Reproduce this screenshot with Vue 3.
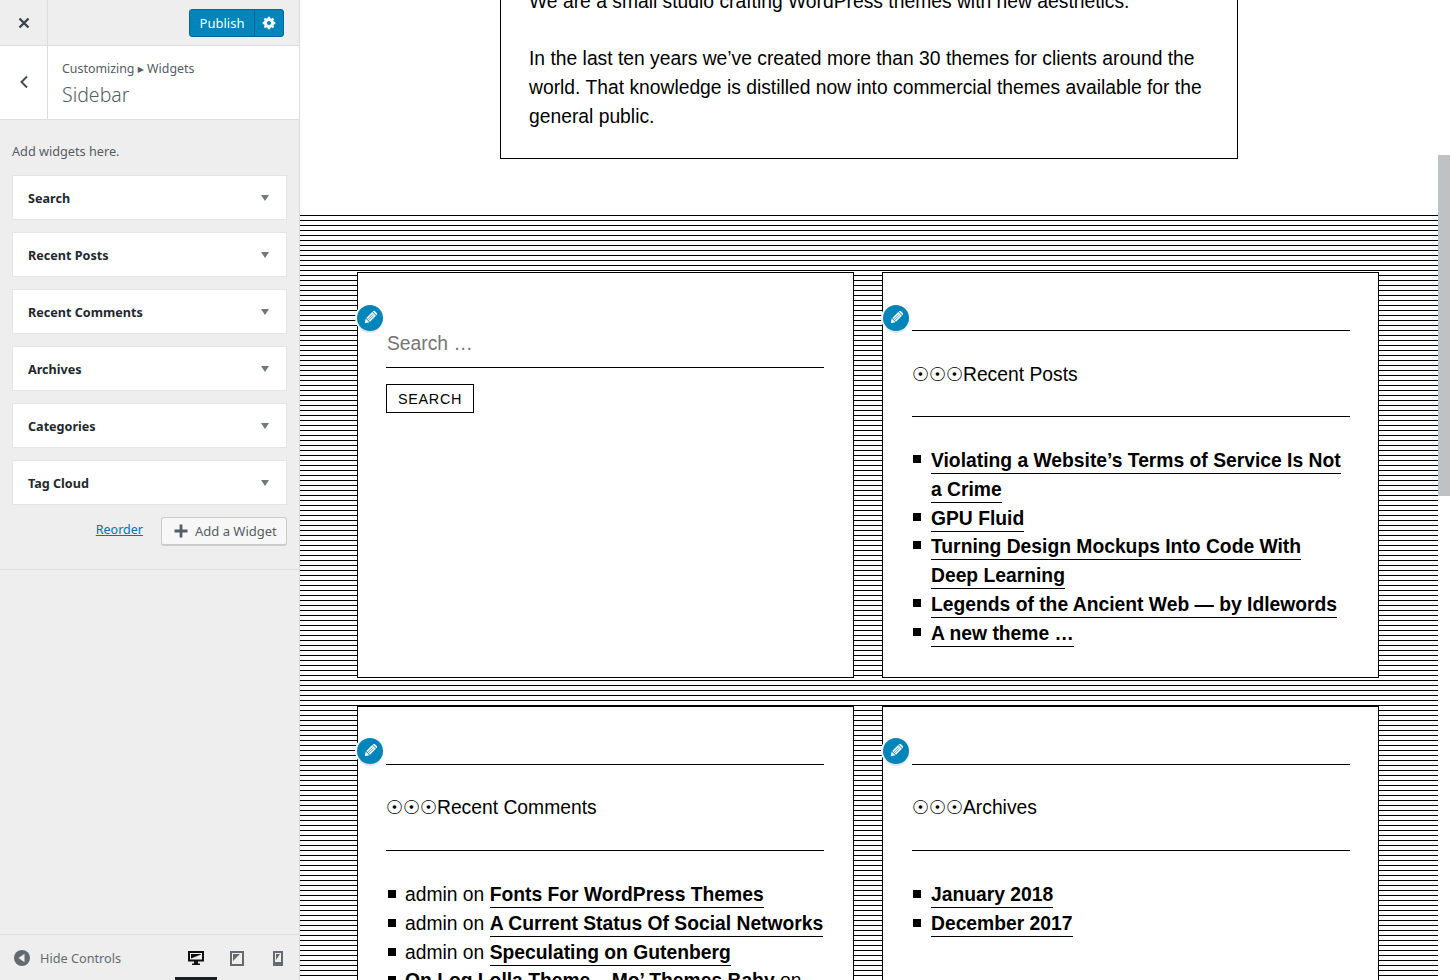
<script setup>
const widgets = ['Search', 'Recent Posts', 'Recent Comments', 'Archives', 'Categories', 'Tag Cloud']
const posts = [
  'Violating a Website’s Terms of Service Is Not a Crime',
  'GPU Fluid',
  'Turning Design Mockups Into Code With Deep Learning',
  'Legends of the Ancient Web — by Idlewords',
  'A new theme …'
]
const comments = [
  { a: 'admin on ', t: 'Fonts For WordPress Themes' },
  { a: 'admin on ', t: 'A Current Status Of Social Networks' },
  { a: 'admin on ', t: 'Speculating on Gutenberg' },
  { a: '', t: 'On Log Lolla Theme – Mo’ Themes Baby', b: ' on' }
]
const archives = ['January 2018', 'December 2017']
</script>

<template>
  <div class="app">
    <aside class="side">
      <div class="top">
        <div class="close">
          <svg width="12" height="12" viewBox="0 0 12 12"><path d="M1.500 1.500l9 9M10.500 1.500l-9 9" stroke="#3c434a" stroke-width="2.400" fill="none"/></svg>
        </div>
        <div class="pub-wrap">
          <div class="pub">
            <span class="pub-text">Publish</span>
            <span class="pub-gear">
              <svg width="14" height="14" viewBox="0 0 20 20"><path fill="#fff" d="M18 11.500v-3l-2.300-.5a6 6 0 0 0-.6-1.400l1.300-2-2.100-2.100-2 1.300a6 6 0 0 0-1.400-.6L10.500 1h-3L7 3.200a6 6 0 0 0-1.400.6l-2-1.300L1.500 4.600l1.300 2a6 6 0 0 0-.6 1.400L0 8.500v3l2.200.5a6 6 0 0 0 .6 1.400l-1.300 2 2.100 2.100 2-1.300a6 6 0 0 0 1.400.6l.5 2.200h3l.5-2.200a6 6 0 0 0 1.400-.6l2 1.300 2.100-2.100-1.300-2a6 6 0 0 0 .6-1.400zM9 13a3 3 0 1 1 0-6 3 3 0 0 1 0 6z" transform="translate(1 0)"/></svg>
            </span>
          </div>
        </div>
      </div>
      <div class="head">
        <div class="back">
          <svg width="10" height="14" viewBox="0 0 10 14"><path d="M8 1.500L2.500 7 8 12.500" stroke="#444c55" stroke-width="2" fill="none"/></svg>
        </div>
        <div class="head-text">
          <div class="crumb">Customizing <span class="crumb-arrow">▶</span> Widgets</div>
          <div class="title">Sidebar</div>
        </div>
      </div>
      <div class="panel">
        <p class="hint">Add widgets here.</p>
        <div v-for="w in widgets" :key="w" class="widget">
          <span>{{ w }}</span>
          <i class="tri"></i>
        </div>
        <div class="actions">
          <a class="reorder">Reorder</a>
          <div class="add">
            <svg width="14" height="14" viewBox="0 0 14 14"><path d="M7 0.500v13M0.500 7h13" stroke="#555d66" stroke-width="2.800" fill="none"/></svg>
            <span>Add a Widget</span>
          </div>
        </div>
      </div>
      <div class="foot">
        <div class="hide">
          <svg width="16" height="16" viewBox="0 0 16 16"><circle cx="8" cy="8" r="8" fill="#656a70"/><path d="M10.500 3.700v8.600L4.500 8z" fill="#eee"/></svg>
          <span>Hide Controls</span>
        </div>
        <div class="devices">
          <div class="dev active">
            <svg width="16" height="16" viewBox="0 0 16 16"><path fill="#111" fill-rule="evenodd" d="M0 1h16v10.500H10V13.500h2V15H4v-1.500h2V11.500H0zM2 3v6.500h12V3z"/><path fill="#111" d="M3 4h10v0.500L3 8.500z"/></svg>
          </div>
          <div class="dev">
            <svg width="14" height="16" viewBox="0 0 14 16"><path fill="#656a70" fill-rule="evenodd" d="M0 1h14v15H0zM2 3v11h10V3z"/><path fill="#656a70" d="M3 4h7L3 11z"/></svg>
          </div>
          <div class="dev">
            <svg width="10" height="16" viewBox="0 0 10 16"><path fill="#656a70" fill-rule="evenodd" d="M0 1h10v15H0zM2 3v9h6V3z"/><path fill="#656a70" d="M3 4h4L3 10z"/></svg>
          </div>
        </div>
      </div>
    </aside>

    <main class="preview">
      <div class="intro-wrap">
        <div class="intro">
          <p>We are a small studio crafting WordPress themes with new aesthetics.</p>
          <p>In the last ten years we’ve created more than 30 themes for clients around the world. That knowledge is distilled now into commercial themes available for the general public.</p>
        </div>
      </div>
      <section class="stripes">
        <div class="card first">
          <span class="pen"><svg width="14" height="14" viewBox="0 0 16 16"><g transform="rotate(45 8 8)"><path fill="#fff" d="M5 -1.500h6v2H5zM5 1.500h6v9.500H5zM5 12h6l-3 4.500z"/><path stroke="#0085ba" stroke-width=".8" d="M7 3v8M9 3v8"/></g></svg></span>
          <div class="search-field">Search …</div>
          <div class="search-btn">SEARCH</div>
        </div>
        <div class="card first">
          <span class="pen"><svg width="14" height="14" viewBox="0 0 16 16"><g transform="rotate(45 8 8)"><path fill="#fff" d="M5 -1.500h6v2H5zM5 1.500h6v9.500H5zM5 12h6l-3 4.500z"/><path stroke="#0085ba" stroke-width=".8" d="M7 3v8M9 3v8"/></g></svg></span>
          <h2 class="wtitle"><span class="suns">☉☉☉</span>Recent Posts</h2>
          <ul class="list">
            <li v-for="p in posts" :key="p"><a>{{ p }}</a></li>
          </ul>
        </div>
        <div class="card second">
          <span class="pen"><svg width="14" height="14" viewBox="0 0 16 16"><g transform="rotate(45 8 8)"><path fill="#fff" d="M5 -1.500h6v2H5zM5 1.500h6v9.500H5zM5 12h6l-3 4.500z"/><path stroke="#0085ba" stroke-width=".8" d="M7 3v8M9 3v8"/></g></svg></span>
          <h2 class="wtitle"><span class="suns">☉☉☉</span>Recent Comments</h2>
          <ul class="list">
            <li v-for="c in comments" :key="c.t">{{ c.a }}<a>{{ c.t }}</a>{{ c.b }}</li>
          </ul>
        </div>
        <div class="card second">
          <span class="pen"><svg width="14" height="14" viewBox="0 0 16 16"><g transform="rotate(45 8 8)"><path fill="#fff" d="M5 -1.500h6v2H5zM5 1.500h6v9.500H5zM5 12h6l-3 4.500z"/><path stroke="#0085ba" stroke-width=".8" d="M7 3v8M9 3v8"/></g></svg></span>
          <h2 class="wtitle"><span class="suns">☉☉☉</span>Archives</h2>
          <ul class="list">
            <li v-for="a in archives" :key="a"><a>{{ a }}</a></li>
          </ul>
        </div>
      </section>
    </main>

    <div class="scroll"><div class="thumb"></div></div>
  </div>
</template>

<style>
html, body { margin: 0; overflow: hidden; background: #fff; }
</style>

<style scoped>
.app { width: 1450px; height: 980px; display: flex; overflow: hidden; background: #fff; }
.side { width: 300px; height: 980px; flex: none; background: #eee; border-right: 1px solid #ddd; display: flex; flex-direction: column; font-family: "Noto Sans", sans-serif; color: #555d66; box-sizing: border-box; }
.top { height: 46px; flex: none; display: flex; border-bottom: 1px solid #ddd; box-sizing: border-box; }
.close { width: 48px; border-right: 1px solid #ddd; box-sizing: border-box; display: flex; align-items: center; justify-content: center; }
.pub-wrap { flex: 1; display: flex; justify-content: flex-end; padding: 9px 15px 0 0; }
.pub { width: 95px; height: 28px; display: flex; background: #0085ba; border: 1px solid #006799; border-radius: 3px; box-sizing: border-box; color: #fff; font-size: 13px; }
.pub-text { width: 64px; text-align: center; line-height: 26px; }
.pub-gear { flex: 1; border-left: 1px solid #006799; display: flex; align-items: center; justify-content: center; }
.head { height: 73px; flex: none; display: flex; background: #fff; border-bottom: 1px solid #ddd; box-sizing: content-box; }
.back { width: 48px; border-right: 1px solid #ddd; display: flex; align-items: center; justify-content: center; padding-bottom: 1px; box-sizing: border-box; }
.head-text { padding: 14px 0 0 14px; }
.crumb { font-size: 12.400px; line-height: 18px; color: #555d66; white-space: nowrap; }
.crumb-arrow { font-size: 8px; position: relative; top: -1px; font-family: "DejaVu Sans", sans-serif; }
.title { font-size: 19.500px; line-height: 28px; margin-top: 1px; color: #555d66; font-weight: 300; }
.panel { padding: 0 12px; height: 449px; border-bottom: 1px solid #ddd; flex: none; }
.hint { margin: 0; padding-top: 22px; font-size: 12.700px; line-height: 18px; height: 33px; }
.widget { height: 45px; margin-bottom: 12px; background: #fff; border: 1px solid #e5e5e5; box-sizing: border-box; display: flex; align-items: center; justify-content: space-between; padding: 2px 17px 0 15px; font-size: 12.600px; font-weight: 700; color: #23282d; }
.tri { width: 0; height: 0; border-left: 4px solid transparent; border-right: 4px solid transparent; border-top: 6px solid #72777c; margin-top: -2px; }
.actions { display: flex; justify-content: flex-end; align-items: flex-start; gap: 18px; }
.reorder { font-size: 12.500px; color: #0073aa; text-decoration: underline; line-height: 18px; margin-top: 4px; }
.add { width: 126px; height: 29px; background: #f7f7f7; border: 1px solid #ccc; border-bottom-width: 2px; border-radius: 3px; box-sizing: border-box; display: flex; align-items: center; gap: 7px; padding-left: 12px; font-size: 13px; white-space: nowrap; }
.foot { margin-top: auto; height: 46px; border-top: 1px solid #ddd; box-sizing: border-box; display: flex; justify-content: space-between; padding-left: 14px; }
.hide { display: flex; align-items: center; gap: 10px; font-size: 12.700px; color: #656a70; }
.devices { display: flex; }
.dev { width: 41px; height: 45px; display: flex; align-items: center; justify-content: center; box-sizing: border-box; padding-right: 1px; }
.dev.active { width: 42px; border-bottom: 3px solid #191e23; padding: 3px 0 0; }
.preview { width: 1138px; height: 980px; flex: none; background: #fff; font-family: "Liberation Sans", sans-serif; color: #000; overflow: hidden; }
.intro-wrap { height: 215px; display: flex; justify-content: center; }
.intro { width: 738px; height: 189px; margin-top: -30px; border: 1px solid #000; box-sizing: border-box; padding: 16.600px 28px 0; font-size: 19.300px; line-height: 28.800px; }
.intro p { margin: 0 0 29px; }
.stripes { display: grid; grid-template-columns: 497px 497px; column-gap: 28px; row-gap: 28px; padding: 57px 0 0 57px; height: 765px; box-sizing: border-box; background: repeating-linear-gradient(to bottom, #000 0, #000 1px, #fff 1px, #fff 5px); }
.card { position: relative; height: 406px; background: #fff; border: 1px solid #000; box-sizing: border-box; padding: 57px 29px 0 28px; }
.card:nth-child(even) { padding: 57px 28px 0 29px; }
.pen { position: absolute; left: -1px; top: 31px; width: 26px; height: 26px; border-radius: 50%; background: #0085ba; box-shadow: 0 2px 1px rgba(46,68,83,.15), 0 0 0 2px #fff; display: flex; align-items: center; justify-content: center; z-index: 2; }
.card.first .pen { top: 32px; }
.card:nth-child(even) .pen { left: 0; }
.search-field { height: 37px; border-bottom: 1px solid #000; font-size: 19.300px; line-height: 28px; color: #757575; padding-left: 1px; }
.search-btn { margin-top: 16px; width: 88px; height: 29px; border: 1px solid #000; box-sizing: border-box; font-size: 14.400px; letter-spacing: .7px; text-align: center; line-height: 27px; padding-top: 1px; }
.wtitle { margin: 0; border-top: 1px solid #000; border-bottom: 1px solid #000; height: 87px; box-sizing: border-box; font-size: 19.300px; font-weight: 400; line-height: 87px; font-family: "Liberation Sans", "DejaVu Sans", sans-serif; }
.second .wtitle { line-height: 85px; }
.suns { letter-spacing: -.3px; }
.list { margin: 30px 0 0; padding: 0; list-style: none; font-size: 19.300px; line-height: 28.800px; }
.list li { position: relative; padding-left: 19px; }
.list li::before { content: ""; position: absolute; left: 2px; top: 8px; width: 8px; height: 8px; background: #000; }
.second .list li::before { top: 9px; }
.card:nth-child(even) .list li::before { left: 1px; }
.list a { font-weight: 700; color: #000; border-bottom: 1px solid #000; padding-bottom: 2px; }
.scroll { width: 12px; height: 980px; flex: none; background: #fff; }
.thumb { height: 341px; margin-top: 155px; background: #bec2c4; }
</style>
